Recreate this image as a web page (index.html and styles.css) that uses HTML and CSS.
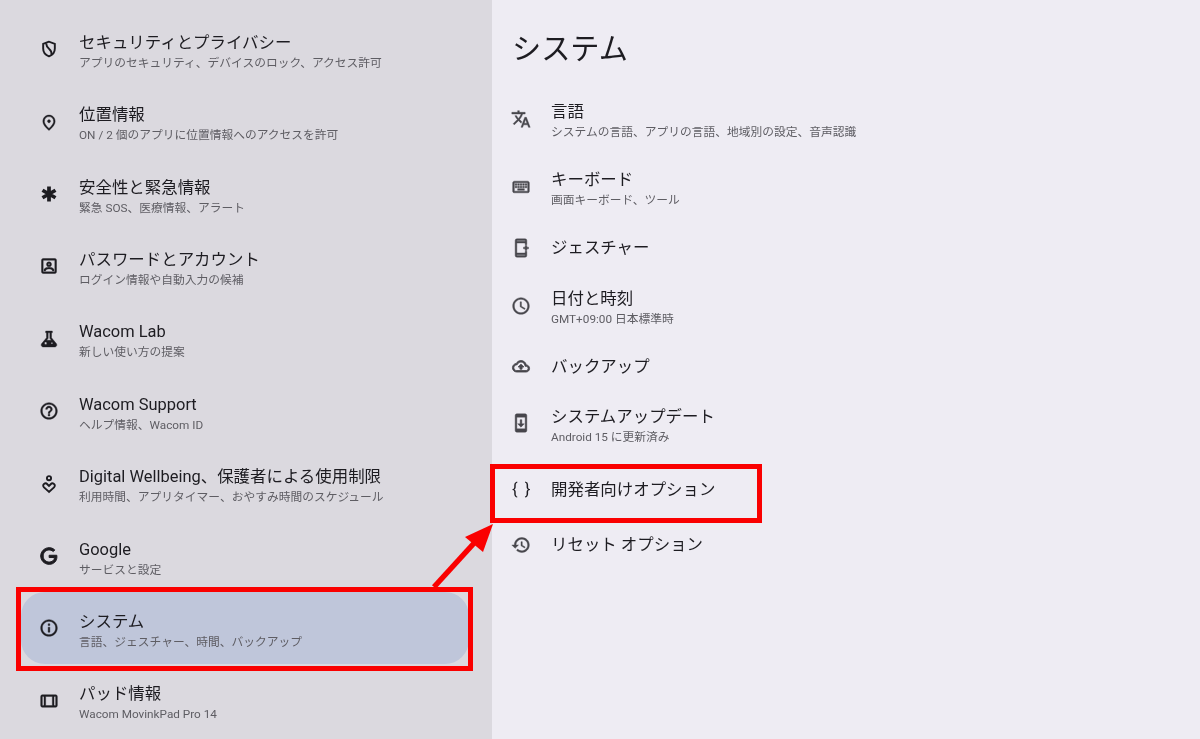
FILE: index.html
```html
<!DOCTYPE html>
<html lang="ja">
<head>
<meta charset="utf-8">
<title>システム</title>
<link rel="stylesheet" href="styles.css">
</head>
<body>
<div class="page">
  <nav class="nav">
    <div class="row"><svg class="ico" viewBox="0 0 24 24"><path class="ln" d="M12 3.200 5 5.800v5.600c0 4.400 3 8 7 9.400 4-1.400 7-5 7-9.400V5.800z"/><path class="ln" d="M8.500 5.200c.3 3 1.800 5.300 4 7 1.800 1.400 2.800 3.500 2.600 6.800"/></svg><div class="txt"><div class="t">セキュリティとプライバシー</div><div class="s">アプリのセキュリティ、デバイスのロック、アクセス許可</div></div></div>
    <div class="row"><svg class="ico" viewBox="-1 -2 26 26"><path d="M12 12c-1.100 0-2-.9-2-2s.9-2 2-2 2 .9 2 2-.9 2-2 2zm6-1.800C18 6.570 15.350 4 12 4s-6 2.570-6 6.200c0 2.340 1.950 5.440 6 9.140 4.050-3.700 6-6.800 6-9.140zM12 2c4.200 0 8 3.220 8 8.200 0 3.320-2.670 7.250-8 11.800-5.330-4.550-8-8.480-8-11.800C4 5.220 7.800 2 12 2z"/></svg><div class="txt"><div class="t">位置情報</div><div class="s">ON / 2 個のアプリに位置情報へのアクセスを許可</div></div></div>
    <div class="row"><svg class="ico" viewBox="0 0 24 24"><path class="thick" d="M12 3v18M4.200 7.500l15.600 9M19.800 7.500l-15.600 9"/></svg><div class="txt"><div class="t">安全性と緊急情報</div><div class="s">緊急 SOS、医療情報、アラート</div></div></div>
    <div class="row"><svg class="ico" viewBox="0 0 24 24"><path d="M3 5a2 2 0 0 1 2-2h14a2 2 0 0 1 2 2v14a2 2 0 0 1-2 2H5a2 2 0 0 1-2-2zm2 0v14h14V5zm7 2a3 3 0 1 1 0 6 3 3 0 0 1 0-6zm0 2a1 1 0 1 0 0 2 1 1 0 0 0 0-2zM6 18v-1.500c0-2 4-3 6-3s6 1 6 3V18h-2v-1.300c-.6-.6-2.500-1.200-4-1.200s-3.400.6-4 1.200V18z"/></svg><div class="txt"><div class="t">パスワードとアカウント</div><div class="s">ログイン情報や自動入力の候補</div></div></div>
    <div class="row"><svg class="ico" viewBox="0 0 24 24"><path fill-rule="evenodd" d="M8 2.500h8v2h-1v6l6 7.300c1 1.500 0 3.700-1.800 3.700H4.800c-1.800 0-2.800-2.200-1.800-3.700l6-7.300v-6H8zm3 2v6.700L9.200 13.500h5.600L13 11.200V4.500zM8 15.500a1.500 1.500 0 1 0 0 3 1.500 1.500 0 0 0 0-3zm7.500.5a1 1 0 1 0 0 2 1 1 0 0 0 0-2z"/></svg><div class="txt"><div class="t">Wacom Lab</div><div class="s">新しい使い方の提案</div></div></div>
    <div class="row"><svg class="ico" viewBox="0 0 24 24"><path d="M11 18h2v-2h-2v2zm1-16C6.480 2 2 6.480 2 12s4.480 10 10 10 10-4.480 10-10S17.520 2 12 2zm0 18c-4.410 0-8-3.590-8-8s3.590-8 8-8 8 3.590 8 8-3.590 8-8 8zm0-14c-2.210 0-4 1.790-4 4h2c0-1.100.9-2 2-2s2 .9 2 2c0 2-3 1.750-3 5h2c0-2.250 3-2.500 3-5 0-2.210-1.790-4-4-4z"/></svg><div class="txt"><div class="t">Wacom Support</div><div class="s">ヘルプ情報、Wacom ID</div></div></div>
    <div class="row"><svg class="ico" viewBox="0 0 24 24"><circle class="ln" cx="12" cy="5" r="2.500"/><path class="ln" d="M12 21.500 6 16c-1.300-1.300-1.300-3 0-4 1.300-1 3-.8 4 .3l2 2 2-2c1-1.100 2.700-1.300 4-.3 1.300 1 1.300 2.700 0 4z"/></svg><div class="txt"><div class="t">Digital Wellbeing、保護者による使用制限</div><div class="s">利用時間、アプリタイマー、おやすみ時間のスケジュール</div></div></div>
    <div class="row"><svg class="ico" viewBox="0 0 24 24"><path d="M21.350 11.100h-9.170v2.730h6.510c-.33 3.810-3.500 5.440-6.500 5.440C8.360 19.270 5 16.250 5 12c0-4.100 3.200-7.270 7.200-7.270 3.090 0 4.900 1.970 4.900 1.970L19 4.720S16.560 2 12.100 2C6.420 2 2.030 6.800 2.030 12c0 5.050 4.130 10 10.220 10 5.350 0 9.250-3.670 9.250-9.090 0-1.150-.15-1.810-.15-1.810z" class="bold"/></svg><div class="txt"><div class="t">Google</div><div class="s">サービスと設定</div></div></div>
    <div class="row selected"><svg class="ico" viewBox="0 0 24 24"><path d="M11 7h2v2h-2zm0 4h2v6h-2zm1-9C6.480 2 2 6.480 2 12s4.480 10 10 10 10-4.480 10-10S17.520 2 12 2zm0 18c-4.410 0-8-3.590-8-8s3.590-8 8-8 8 3.590 8 8-3.590 8-8 8z"/></svg><div class="txt"><div class="t">システム</div><div class="s">言語、ジェスチャー、時間、バックアップ</div></div></div>
    <div class="row"><svg class="ico" viewBox="0 0 24 24"><path d="M4 4.500h16a2 2 0 0 1 2 2v11a2 2 0 0 1-2 2H4a2 2 0 0 1-2-2v-11a2 2 0 0 1 2-2zm0 2v11h2v-11zm4 0v11h8v-11zm10 0v11h2v-11z"/></svg><div class="txt"><div class="t">パッド情報</div><div class="s">Wacom MovinkPad Pro 14</div></div></div>
  </nav>
  <main class="main">
    <h1 class="head">システム</h1>
    <div class="list">
      <div class="row2 two"><svg class="ico" viewBox="0 0 24 24"><path d="M12.870 15.070l-2.540-2.510.03-.03c1.740-1.940 2.980-4.170 3.710-6.530H17V4h-7V2H8v2H1v1.990h11.170C11.500 7.920 10.440 9.750 9 11.350 8.070 10.320 7.300 9.190 6.690 8h-2c.73 1.630 1.730 3.170 2.980 4.560l-5.090 5.020L4 19l5-5 3.110 3.110.76-2.040zM18.500 10h-2L12 22h2l1.120-3h4.750L21 22h2l-4.500-12zm-2.620 7l1.620-4.330L19.120 17h-3.240z"/></svg><div class="txt"><div class="t">言語</div><div class="s">システムの言語、アプリの言語、地域別の設定、音声認識</div></div></div>
      <div class="row2 two"><svg class="ico" viewBox="0 0 24 24"><path d="M20 7v10H4V7h16m0-2H4c-1.100 0-1.990.9-1.990 2L2 17c0 1.100.9 2 2 2h16c1.100 0 2-.9 2-2V7c0-1.100-.9-2-2-2zm-9 3h2v2h-2zm0 3h2v2h-2zM8 8h2v2H8zm0 3h2v2H8zm-3 0h2v2H5zm0-3h2v2H5zm3 6h8v2H8zm6-3h2v2h-2zm0-3h2v2h-2zm3 3h2v2h-2zm0-3h2v2h-2z"/></svg><div class="txt"><div class="t">キーボード</div><div class="s">画面キーボード、ツール</div></div></div>
      <div class="row2"><svg class="ico" viewBox="0 0 24 24"><path d="M7 1h10a2 2 0 0 1 2 2v5h-2V6H7v12h10v-2h2v5a2 2 0 0 1-2 2H7a2 2 0 0 1-2-2V3a2 2 0 0 1 2-2zm0 2v1h10V3zm0 17v1h10v-1zM17 9h2v2h2v2h-2v2h-2v-2h-2v-2h2z"/></svg><div class="txt"><div class="t">ジェスチャー</div></div></div>
      <div class="row2 two"><svg class="ico" viewBox="0 0 24 24"><path d="M11.990 2C6.470 2 2 6.480 2 12s4.470 10 9.990 10C17.520 22 22 17.520 22 12S17.520 2 11.990 2zM12 20c-4.420 0-8-3.580-8-8s3.580-8 8-8 8 3.580 8 8-3.580 8-8 8zm.5-13H11v6l5.250 3.150.75-1.230-4.500-2.670z"/></svg><div class="txt"><div class="t">日付と時刻</div><div class="s">GMT+09:00 日本標準時</div></div></div>
      <div class="row2"><svg class="ico" viewBox="-2 -1 28 28"><path class="bold" d="M19.350 10.040C18.670 6.590 15.640 4 12 4 9.110 4 6.600 5.640 5.350 8.040 2.340 8.360 0 10.910 0 14c0 3.310 2.690 6 6 6h13c2.760 0 5-2.240 5-5 0-2.640-2.050-4.780-4.650-4.960zM19 18H6c-2.210 0-4-1.790-4-4 0-2.050 1.530-3.760 3.560-3.970l1.070-.11.5-.95C8.080 7.140 9.940 6 12 6c2.620 0 4.880 1.860 5.390 4.430l.3 1.500 1.530.11c1.560.1 2.780 1.410 2.780 2.960 0 1.650-1.350 3-3 3zM8 13h2.550v3h2.900v-3H16l-4-4z"/></svg><div class="txt"><div class="t">バックアップ</div></div></div>
      <div class="row2 two"><svg class="ico" viewBox="0 0 24 24"><path d="M17 1.010L7 1c-1.100 0-2 .9-2 2v18c0 1.100.9 2 2 2h10c1.100 0 2-.9 2-2V3c0-1.100-.9-1.990-2-1.990zM17 19H7V5h10v14zm-1-6h-3V8h-2v5H8l4 4 4-4z"/></svg><div class="txt"><div class="t">システムアップデート</div><div class="s">Android 15 に更新済み</div></div></div>
      <div class="row2"><div class="brace">{ }</div><div class="txt"><div class="t">開発者向けオプション</div></div></div>
      <div class="row2"><svg class="ico" viewBox="0 0 24 24"><path d="M13 3c-4.970 0-9 4.030-9 9H1l3.890 3.890.07.14L9 12H6c0-3.870 3.130-7 7-7s7 3.130 7 7-3.130 7-7 7c-1.930 0-3.680-.79-4.940-2.060l-1.420 1.420C8.270 19.990 10.510 21 13 21c4.970 0 9-4.030 9-9s-4.030-9-9-9zm-1 5v5l4.280 2.540.72-1.210-3.500-2.080V8H12z"/></svg><div class="txt"><div class="t">リセット オプション</div></div></div>
    </div>
  </main>
  <div class="mark mark-left"></div>
  <div class="mark mark-right"></div>
  <svg class="arrow" viewBox="0 0 1200 739"><path d="M434 587 476 541" class="shaft"/><path d="M493 524 465 537 483 552z" class="head-a"/></svg>
</div>
</body>
</html>
```

FILE: styles.css
```css
* { box-sizing: border-box; }
html, body { margin: 0; padding: 0; }
body {
  font-family: Roboto, "Noto Sans CJK JP", sans-serif;
  color: #1d1c21;
  overflow: hidden;
}
.page {
  position: relative;
  width: 1200px;
  height: 739px;
  display: flex;
  overflow: hidden;
  filter: blur(0.3px);
}
.nav {
  width: 492px;
  height: 739px;
  background: #dbd9df;
  padding-top: 15.600px;
  display: grid;
  grid-auto-rows: 72.400px;
  overflow: hidden;
}
.row {
  position: relative;
  display: flex;
  align-items: center;
  padding-left: 39px;
}
.selected::before {
  content: "";
  position: absolute;
  left: 21px;
  right: 23px;
  top: -3px;
  height: 72px;
  border-radius: 24px;
  background: #bfc6da;
}
.row > * { position: relative; }
.ico {
  width: 20px;
  height: 20px;
  flex: none;
  fill: currentColor;
  stroke: currentColor;
  stroke-width: 0.500;
  margin-right: 20px;
}
.row .ico, .two .ico { margin-bottom: 5px; }
.ln { fill: none; stroke: currentColor; stroke-width: 2.300; }
.thick { fill: none; stroke: currentColor; stroke-width: 4.500; }
.bold { stroke: currentColor; stroke-width: 1.200; }
.txt { display: flex; flex-direction: column; }
.t {
  font-size: 16.450px;
  line-height: 20px;
  white-space: nowrap;
}
.s {
  font-size: 11.750px;
  line-height: 16px;
  margin-top: 2px;
  color: #5e5d63;
  white-space: nowrap;
}
.main {
  flex: 1;
  height: 739px;
  background: #eeecf3;
  padding-left: 21px;
}
.head {
  margin: 0 0 0 -1px;
  padding-top: 29px;
  height: 87px;
  font-size: 29.200px;
  line-height: 40px;
  font-weight: 400;
}
.list {
  display: grid;
  grid-template-rows: 68px 68px 50px 70px 48px 69px 60px 50px;
}
.row2 {
  display: flex;
  align-items: center;
}
.row2 .ico {
  margin-right: 20px;
  margin-left: -2px;
  color: #47464c;
}
.row2 .t { color: #1d1c21; }
.brace {
  width: 24px;
  flex: none;
  margin-left: -1px;
  margin-right: 15px;
  margin-bottom: 2px;
  font-size: 16.500px;
  word-spacing: 3px;
  white-space: nowrap;
  color: #1d1c21;
}
.mark {
  position: absolute;
  border: 5px solid #fa0000;
}
.mark-left { left: 16px; top: 587px; width: 457px; height: 84px; }
.mark-right { left: 490px; top: 464px; width: 272px; height: 59px; }
.arrow {
  position: absolute;
  left: 0;
  top: 0;
  width: 1200px;
  height: 739px;
  pointer-events: none;
}
.shaft { stroke: #fa0000; stroke-width: 5.500; fill: none; }
.head-a { fill: #fa0000; }
```
